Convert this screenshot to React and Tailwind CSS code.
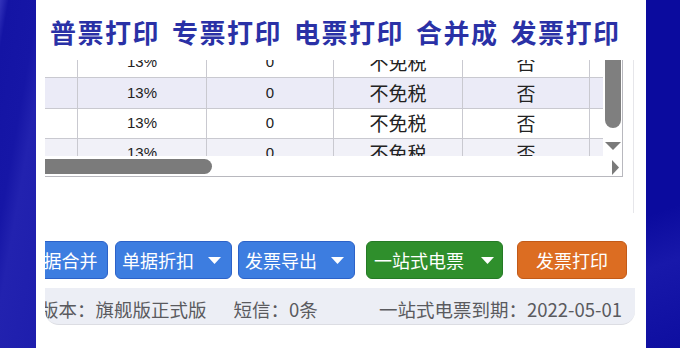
import React from "react";

const LINE = "border-[#c9c9d0]";

function Tri({ className = "" }) {
  return (
    <svg width="13" height="7" viewBox="0 0 13 7" className={className}>
      <polygon points="0,0 13,0 6.5,7" fill="white" />
    </svg>
  );
}

function Row({ h, bg }) {
  const num = "font-['Liberation_Sans',Arial,sans-serif] text-[15px]";
  const cjk = "font-['Noto_Sans_CJK_SC',sans-serif] text-[19px]";
  return (
    <div className={`flex border-b ${LINE} ${bg} ${h}`}>
      <div className="w-[32px]" />
      <div className={`w-[129px] border-l ${LINE} flex items-center justify-center ${num}`}>13%</div>
      <div className={`w-[127px] border-l ${LINE} flex items-center justify-center ${num}`}>0</div>
      <div className={`w-[129px] border-l ${LINE} flex items-center justify-center ${cjk}`}>不免税</div>
      <div className={`w-[127px] border-l ${LINE} flex items-center justify-center ${cjk}`}>否</div>
      <div className={`w-[14px] border-l ${LINE}`} />
    </div>
  );
}

export default function App() {
  const groups = ["普票打印", "专票打印", "电票打印", "合并成", "发票打印"];
  return (
    <div className="flex w-[680px] h-[348px] overflow-hidden font-['Noto_Sans_CJK_SC','Noto_Sans',sans-serif]">
      <div className="w-[36px] h-full bg-[linear-gradient(100deg,#3434bb_0%,#1414a4_9%,#1616a6_40%,#2222af_55%,#1e1ead_100%)]" />
      <div className="flex-1 bg-white flex flex-col">
        <div className="h-[60px] flex items-center pl-[14px] pt-[4px] gap-[12px] text-[26px] font-bold tracking-[1.5px] text-[#2a31a6] leading-none">
          {groups.map((g) => (
            <span key={g}>{g}</span>
          ))}
        </div>

        <div className="ml-[9px] w-[589px] h-[153px] border-r border-[#e6e6ea] pr-[10px]">
          <div className="w-[578px] h-[117px] flex border-r border-b border-[#b8b8be] text-[#222]">
            <div className="w-[558px] flex flex-col">
              <div className="h-[97px] overflow-hidden">
                <div className="mt-[-12px]">
                  <Row h="h-[30px]" bg="bg-white" />
                  <Row h="h-[31px]" bg="bg-[#ebebf7]" />
                  <Row h="h-[30px]" bg="bg-white" />
                  <Row h="h-[30px]" bg="bg-[#f1f1f8]" />
                </div>
              </div>
              <div className="h-[20px] pt-[3px]">
                <div className="w-[167px] h-[15px] rounded-r-full bg-[#7b7b7b]" />
              </div>
            </div>
            <div className="flex-1 flex flex-col items-center">
              <div className="w-[16px] h-[68px] rounded-b-full bg-[#7f7f7f]" />
              <svg width="16" height="8" viewBox="0 0 16 8" className="mt-[14px]">
                <polygon points="0,0 16,0 8,8" fill="#7a7a7a" />
              </svg>
              <svg width="7" height="15" viewBox="0 0 7 15" className="mt-[10px] ml-[6px]">
                <polygon points="0,0 7,7.5 0,15" fill="#7a7a7a" />
              </svg>
            </div>
          </div>
        </div>

        <div className="mt-[28px] ml-[9px] w-[590px] h-[38px] flex overflow-hidden text-white text-[18px] leading-none">
          <div className="ml-[-30px] w-[93px] shrink-0 h-full rounded-[6px] border border-[#2c62c8] bg-[#3d7de0] flex items-center justify-center">
            单据合并
          </div>
          <div className="ml-[7px] w-[117px] shrink-0 h-full rounded-[6px] border border-[#2c62c8] bg-[#3d7de0] flex items-center pl-[6px] gap-[14px]">
            <span>单据折扣</span>
            <Tri />
          </div>
          <div className="ml-[6px] w-[117px] shrink-0 h-full rounded-[6px] border border-[#2c62c8] bg-[#3d7de0] flex items-center pl-[6px] gap-[14px]">
            <span>发票导出</span>
            <Tri />
          </div>
          <div className="ml-[11px] w-[137px] shrink-0 h-full rounded-[6px] border border-[#257a25] bg-[#2f8f2c] flex items-center pl-[7px] gap-[17px]">
            <span>一站式电票</span>
            <Tri />
          </div>
          <div className="ml-[14px] w-[110px] shrink-0 h-full rounded-[6px] border border-[#c25a18] bg-[#dc6d22] flex items-center justify-center">
            发票打印
          </div>
        </div>

        <div className="mt-[9px] ml-[9px] w-[590px] h-[37px] rounded-b-[14px] bg-[#eceef5] border-b border-[#dcdde3] flex items-center overflow-hidden text-[18.5px] text-[#5a5a5e] leading-none pr-[13px] pt-[6px]">
          <span className="ml-[-5px] whitespace-nowrap">版本：旗舰版正式版</span>
          <span className="ml-[27px] whitespace-nowrap">短信：0条</span>
          <span className="ml-auto whitespace-nowrap">一站式电票到期：2022-05-01</span>
        </div>
      </div>
      <div className="w-[34px] h-full bg-[linear-gradient(160deg,#0b0b9e_0%,#0b0b9e_60%,#1818aa_75%,#0e0ea0_100%)]" />
    </div>
  );
}
